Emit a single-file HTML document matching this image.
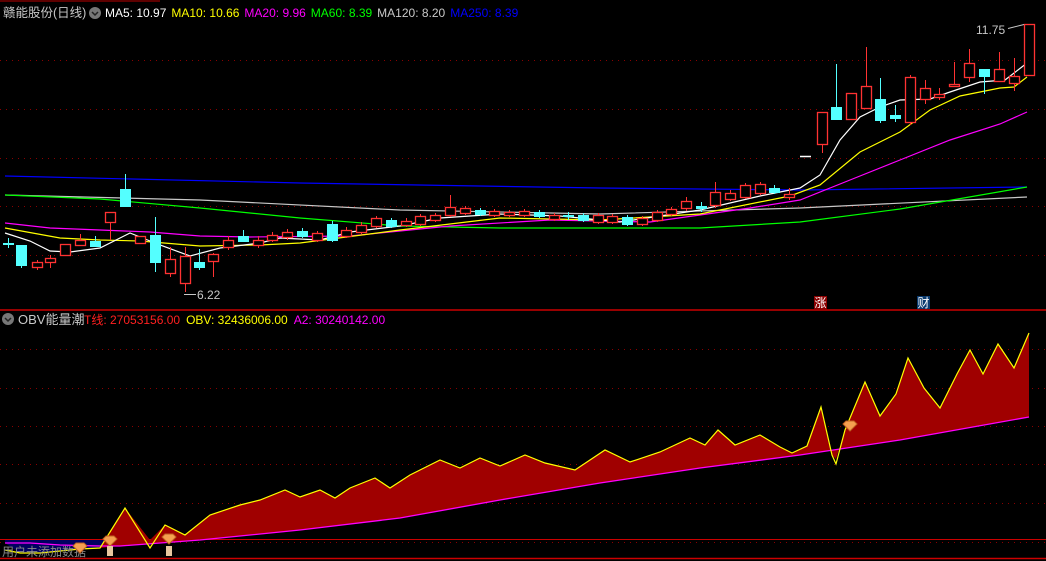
<!DOCTYPE html>
<html><head><meta charset="utf-8">
<style>
html,body{margin:0;padding:0;background:#000;width:1046px;height:561px;overflow:hidden}
svg{display:block}
text{font-family:"Liberation Sans","Noto Sans CJK SC",sans-serif}
</style></head><body>
<svg id="s" width="1046" height="561" viewBox="0 0 1046 561" xmlns="http://www.w3.org/2000/svg">
<rect width="1046" height="561" fill="#000"/>
<line x1="0" y1="1" x2="160" y2="1" stroke="#b00" stroke-width="1"/>
<g stroke="#8a0000" stroke-dasharray="1,5" stroke-width="1">
<line x1="0" y1="60.5" x2="1046" y2="60.5"/><line x1="0" y1="109.5" x2="1046" y2="109.5"/>
<line x1="0" y1="158.5" x2="1046" y2="158.5"/><line x1="0" y1="206.5" x2="1046" y2="206.5"/>
<line x1="0" y1="255.5" x2="1046" y2="255.5"/>
<line x1="0" y1="349.5" x2="1046" y2="349.5"/><line x1="0" y1="388.5" x2="1046" y2="388.5"/>
<line x1="0" y1="426.5" x2="1046" y2="426.5"/><line x1="0" y1="464.5" x2="1046" y2="464.5"/>
<line x1="0" y1="503.5" x2="1046" y2="503.5"/><line x1="0" y1="542.5" x2="1046" y2="542.5"/>
</g>
<line x1="0" y1="310" x2="1046" y2="310" stroke="#c00" stroke-width="1.5"/>
<line x1="0" y1="539.5" x2="1046" y2="539.5" stroke="#c00" stroke-width="1"/>
<line x1="0" y1="558.5" x2="1046" y2="558.5" stroke="#c00" stroke-width="1.5"/>
<g id="ma" fill="none" stroke-width="1.2">
<polyline stroke="#0000ff" points="5,176 300,183 600,188 800,190 1027,187"/>
<polyline stroke="#c8c8c8" points="5,195 200,200 400,210 600,214 800,208 1027,197"/>
<polyline stroke="#00ff00" points="5,195 100,199 200,208 300,218 400,226 500,228 700,228 800,222 900,209 1027,187"/>
<polyline stroke="#ff00ff" points="5,223 50,228 100,230 150,232 200,236 250,237 350,236 450,226 550,220 650,222 750,208 800,200 850,180 900,160 950,140 1000,124 1027,112"/>
<polyline stroke="#ffff00" points="5,228 60,238 100,240 140,241 200,246 260,245 300,243 400,230 500,218 600,220 700,214 790,196 820,185 860,152 900,132 930,110 960,96 1000,88 1014,87 1027,77"/>
<polyline stroke="#ffffff" points="5,233 30,241 50,251 70,252 100,248 130,233 160,245 190,256 220,248 260,243 280,238 320,240 350,232 400,226 440,218 500,214 560,216 620,222 660,216 700,210 760,196 800,188 820,175 840,140 860,117 880,107 900,100 930,99 950,92 980,82 1005,80 1027,63"/>
</g>
<g id="cd"></g>
<line x1="800" y1="156.5" x2="811" y2="156.5" stroke="#fff" stroke-width="1.5"/>
<text x="976" y="34" fill="#c8c8c8" font-size="12">11.75</text>
<line x1="1008" y1="28.5" x2="1024" y2="24.5" stroke="#c8c8c8"/>
<text x="197" y="299" fill="#c8c8c8" font-size="12">6.22</text>
<line x1="184" y1="294.5" x2="196" y2="294.5" stroke="#c8c8c8"/>
<rect x="814" y="296" width="13" height="13" fill="#8b0000"/><text x="814.5" y="307" fill="#fff" font-size="12">涨</text>
<rect x="917" y="296" width="13" height="13" fill="#0a3a6e"/><text x="917.5" y="307" fill="#fff" font-size="12">财</text>

<polygon fill="#000060" points="5,543 20,553 40,553 60,551 80,549 100,548 110,540 5,540"/>
<polygon fill="#a00000" points="100,548 125,508 150,540 165,525 185,535 210,515 240,505 260,500 285,490 300,497 320,490 335,498 350,488 375,478 390,488 410,475 440,460 460,468 480,458 500,466 525,455 545,463 575,470 605,450 630,462 660,452 690,438 705,445 718,430 735,445 760,435 780,447 792,453 807,446 821,407 832,455 836,459 845,430 865,382 880,416 896,394 908,358 924,388 940,408 957,374 970,350 983,374 998,344 1014,368 1029,333 1029,417 900,440 800,455 700,468 600,483 500,500 400,518 300,530 200,540 120,546"/>
<polyline fill="none" stroke="#ff00ff" stroke-width="1.3" points="5,543 30,543 60,545 100,546 120,546 200,540 300,530 400,518 500,500 600,483 700,468 800,455 900,440 1029,417"/>
<polyline fill="none" stroke="#ffff00" stroke-width="1.2" points="5,550 20,553 40,553 60,551 80,549 100,548 125,508 150,548 165,525 185,535 210,515 240,505 260,500 285,490 300,497 320,490 335,498 350,488 375,478 390,488 410,475 440,460 460,468 480,458 500,466 525,455 545,463 575,470 605,450 630,462 660,452 690,438 705,445 718,430 735,445 760,435 780,447 792,453 807,446 821,407 832,455 836,464 845,430 865,382 880,416 896,394 908,358 924,388 940,408 957,374 970,350 983,374 998,344 1014,368 1029,333"/>
<text x="2" y="556" fill="#888" font-size="12">用户未添加数据</text>
<g id="gems"></g>

<text x="3" y="17" fill="#c8c8c8" font-size="12.5">赣能股份(日线)</text>
<circle cx="95" cy="13" r="6" fill="#777"/><path d="M92 12 l3 3 l3 -3" stroke="#222" stroke-width="1.5" fill="none"/>
<text x="105" y="17" font-size="12"><tspan fill="#fff">MA5: 10.97</tspan><tspan fill="#ffff00" dx="5">MA10: 10.66</tspan><tspan fill="#ff00ff" dx="5">MA20: 9.96</tspan><tspan fill="#00ff00" dx="5">MA60: 8.39</tspan><tspan fill="#c8c8c8" dx="5">MA120: 8.20</tspan><tspan fill="#0000ff" dx="5">MA250: 8.39</tspan></text>
<circle cx="8" cy="319" r="6" fill="#777"/><path d="M5 318 l3 3 l3 -3" stroke="#222" stroke-width="1.5" fill="none"/>
<text x="18" y="324" fill="#c8c8c8" font-size="13">OBV能量潮</text>
<text x="84" y="324" font-size="12"><tspan fill="#ff2020">T线: 27053156.00</tspan><tspan fill="#ffff00" dx="6">OBV: 32436006.00</tspan><tspan fill="#ff00ff" dx="6">A2: 30240142.00</tspan></text>
</svg>
<script>
var C=[
[8,243,243,238,248,0],[21,245,265,245,268,0],[37,262,267,260,270,1],[50,258,262,255,268,1],[65,244,255,244,255,1],[80,240,245,234,245,1],[95,241,246,236,246,0],[110,212,222,212,240,1],[125,189,206,174,206,0],[140,236,243,236,243,1],[155,235,262,217,272,0],[170,259,273,247,277,1],[185,256,283,247,292,1],[199,262,267,249,270,0],[213,254,261,253,277,1],[228,240,247,236,250,1],[243,236,241,230,241,0],[258,240,245,236,248,1],[272,235,240,232,242,1],[287,232,237,229,240,1],[302,231,236,228,238,0],[317,233,240,231,242,1],[332,224,240,221,242,0],[346,230,236,227,238,1],[361,225,232,222,234,1],[376,218,226,216,228,1],[391,220,226,218,228,0],[406,221,225,218,227,1],[420,216,224,214,226,1],[435,215,220,213,222,1],[450,207,215,195,217,1],[465,208,213,206,215,1],[480,210,214,208,216,0],[494,211,215,209,217,1],[509,212,215,210,217,1],[524,211,215,209,217,1],[539,212,216,210,218,0],[554,215,219,213,221,1],[568,215,216,212,220,0],[583,215,220,213,222,0],[598,215,222,213,224,1],[612,216,222,214,224,1],[627,217,224,215,226,0],[642,218,224,216,226,1],[657,212,220,210,222,1],[671,209,214,207,216,1],[686,201,208,197,211,1],[701,206,208,202,212,0],[715,192,205,182,208,1],[730,193,199,190,201,1],[745,185,197,183,199,1],[760,184,193,182,195,1],[774,188,192,185,194,0],[789,194,197,188,200,1],
[822,112,144,112,153,1],[836,107,119,64,119,0],[851,93,119,93,119,1],[866,86,108,47,108,1],[880,99,120,78,123,0],[895,115,118,105,122,0],[910,77,122,75,125,1],[925,88,99,80,104,1],[939,94,97,88,100,1],[954,84,86,62,87,1],[969,63,77,49,82,1],[984,69,76,69,94,0],[999,69,81,52,82,1],[1014,76,83,58,91,1],[1029,24,75,24,75,1]];
var g='';
C.forEach(function(c){var x=c[0],col=c[5]?'#ff3232':'#54ffff';
g+='<line x1="'+(x+.5)+'" y1="'+c[3]+'" x2="'+(x+.5)+'" y2="'+c[4]+'" stroke="'+col+'"/>';
var h=Math.max(c[2]-c[1],1);
if(c[5])g+='<rect x="'+(x-5+.5)+'" y="'+(c[1]+.5)+'" width="10" height="'+h+'" fill="#000" stroke="'+col+'" stroke-width="1.3"/>';
else g+='<rect x="'+(x-5)+'" y="'+c[1]+'" width="11" height="'+(h+1)+'" fill="'+col+'"/>';});
document.getElementById('cd').innerHTML=g;
var gm='';[[80,549],[110,542],[169,540],[850,427]].forEach(function(p){var x=p[0],y=p[1];
gm+='<polygon points="'+(x-7)+','+(y-3)+' '+(x-4)+','+(y-6)+' '+(x+4)+','+(y-6)+' '+(x+7)+','+(y-3)+' '+x+','+(y+4)+'" fill="#f5a050" stroke="#c06020"/>';});
[110,169].forEach(function(x){gm+='<rect x="'+(x-3)+'" y="546" width="6" height="10" fill="#e8c8a0"/>';});
document.getElementById('gems').innerHTML=gm;
</script>
</body></html>
